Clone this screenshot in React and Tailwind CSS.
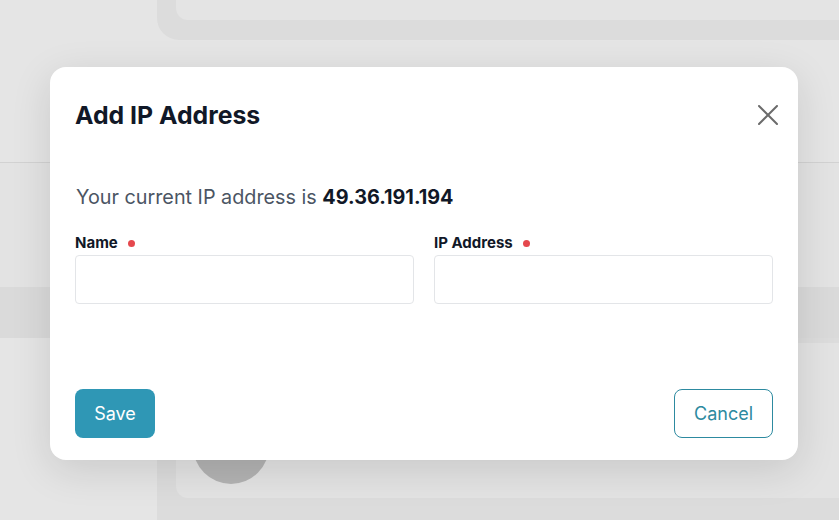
import React from "react";

export default function App() {
  return (
    <div className="relative h-[520px] w-[839px] overflow-hidden bg-[#e5e5e5] font-['Inter',sans-serif]">
      {/* background page (dimmed) */}
      <div className="flex flex-col">
        <div className="ml-[157px] h-[40px] rounded-bl-[22px] bg-[#dcdcdc] pl-[19px]">
          <div className="h-[20px] rounded-bl-[12px] bg-[#e4e4e4]" />
        </div>
        <div className="h-[122px]" />
        <div className="h-px bg-[#d2d2d2]" />
        <div className="h-[124px] bg-[#e3e3e3]" />
        <div className="h-[51px] bg-[#dadada]" />
        <div className="ml-[157px] h-[200px] rounded-tl-[22px] bg-[#dcdcdc] pl-[19px] pt-[5px]">
          <div className="h-[155px] rounded-l-[12px] bg-[#e3e3e3] pl-[17px] pt-[65px]">
            <div className="h-[76px] w-[76px] rounded-full bg-[#b3b3b3]" />
          </div>
        </div>
      </div>

      {/* modal overlay */}
      <div className="absolute inset-0 flex items-start justify-start pl-[50px] pt-[67px]">
        <div className="flex h-[393px] w-[748px] flex-col rounded-[16px] bg-white px-[25px] pb-[22px] shadow-[0_10px_40px_rgba(0,0,0,0.12)]">
          <div className="mt-[32px] flex h-[32px] items-center justify-between">
            <h2 className="text-[24.8px] font-bold leading-[32px] text-[#111827]">Add IP Address</h2>
            <button className="mr-[-7px] flex h-[24px] w-[24px] items-center justify-center text-[#6b6b6b]">
              <svg width="20" height="20" viewBox="0 0 20 20" fill="none" stroke="currentColor" strokeWidth="2" strokeLinecap="round">
                <path d="M1 1L19 19M19 1L1 19" />
              </svg>
            </button>
          </div>

          <p className="mt-[52px] pl-px text-[19.8px] leading-[28px] text-[#4b5563]">
            Your current IP address is <span className="font-bold text-[#111827]">49.36.191.194</span>
          </p>

          <div className="mt-[22px] grid grid-cols-2 gap-[20px]">
            <div className="flex flex-col">
              <label className="flex h-[20px] items-center gap-[10px] text-[15px] font-bold text-[#111827]">
                Name <span className="h-[7px] w-[7px] rounded-full bg-[#e5484d]" />
              </label>
              <input className="mt-[2px] h-[49px] rounded-[4px] border border-[#e3e5e8] bg-white px-3 outline-none" />
            </div>
            <div className="flex flex-col">
              <label className="flex h-[20px] items-center gap-[10px] text-[15px] font-bold text-[#111827]">
                IP Address <span className="h-[7px] w-[7px] rounded-full bg-[#e5484d]" />
              </label>
              <input className="mt-[2px] h-[49px] rounded-[4px] border border-[#e3e5e8] bg-white px-3 outline-none" />
            </div>
          </div>

          <div className="mt-auto flex items-center justify-between">
            <button className="h-[49px] w-[80px] rounded-[8px] bg-[#2f97b5] text-[18px] text-white">Save</button>
            <button className="h-[49px] w-[99px] rounded-[8px] border border-[#2d8aa0] bg-white text-[18px] text-[#2d8aa0]">Cancel</button>
          </div>
        </div>
      </div>
    </div>
  );
}
